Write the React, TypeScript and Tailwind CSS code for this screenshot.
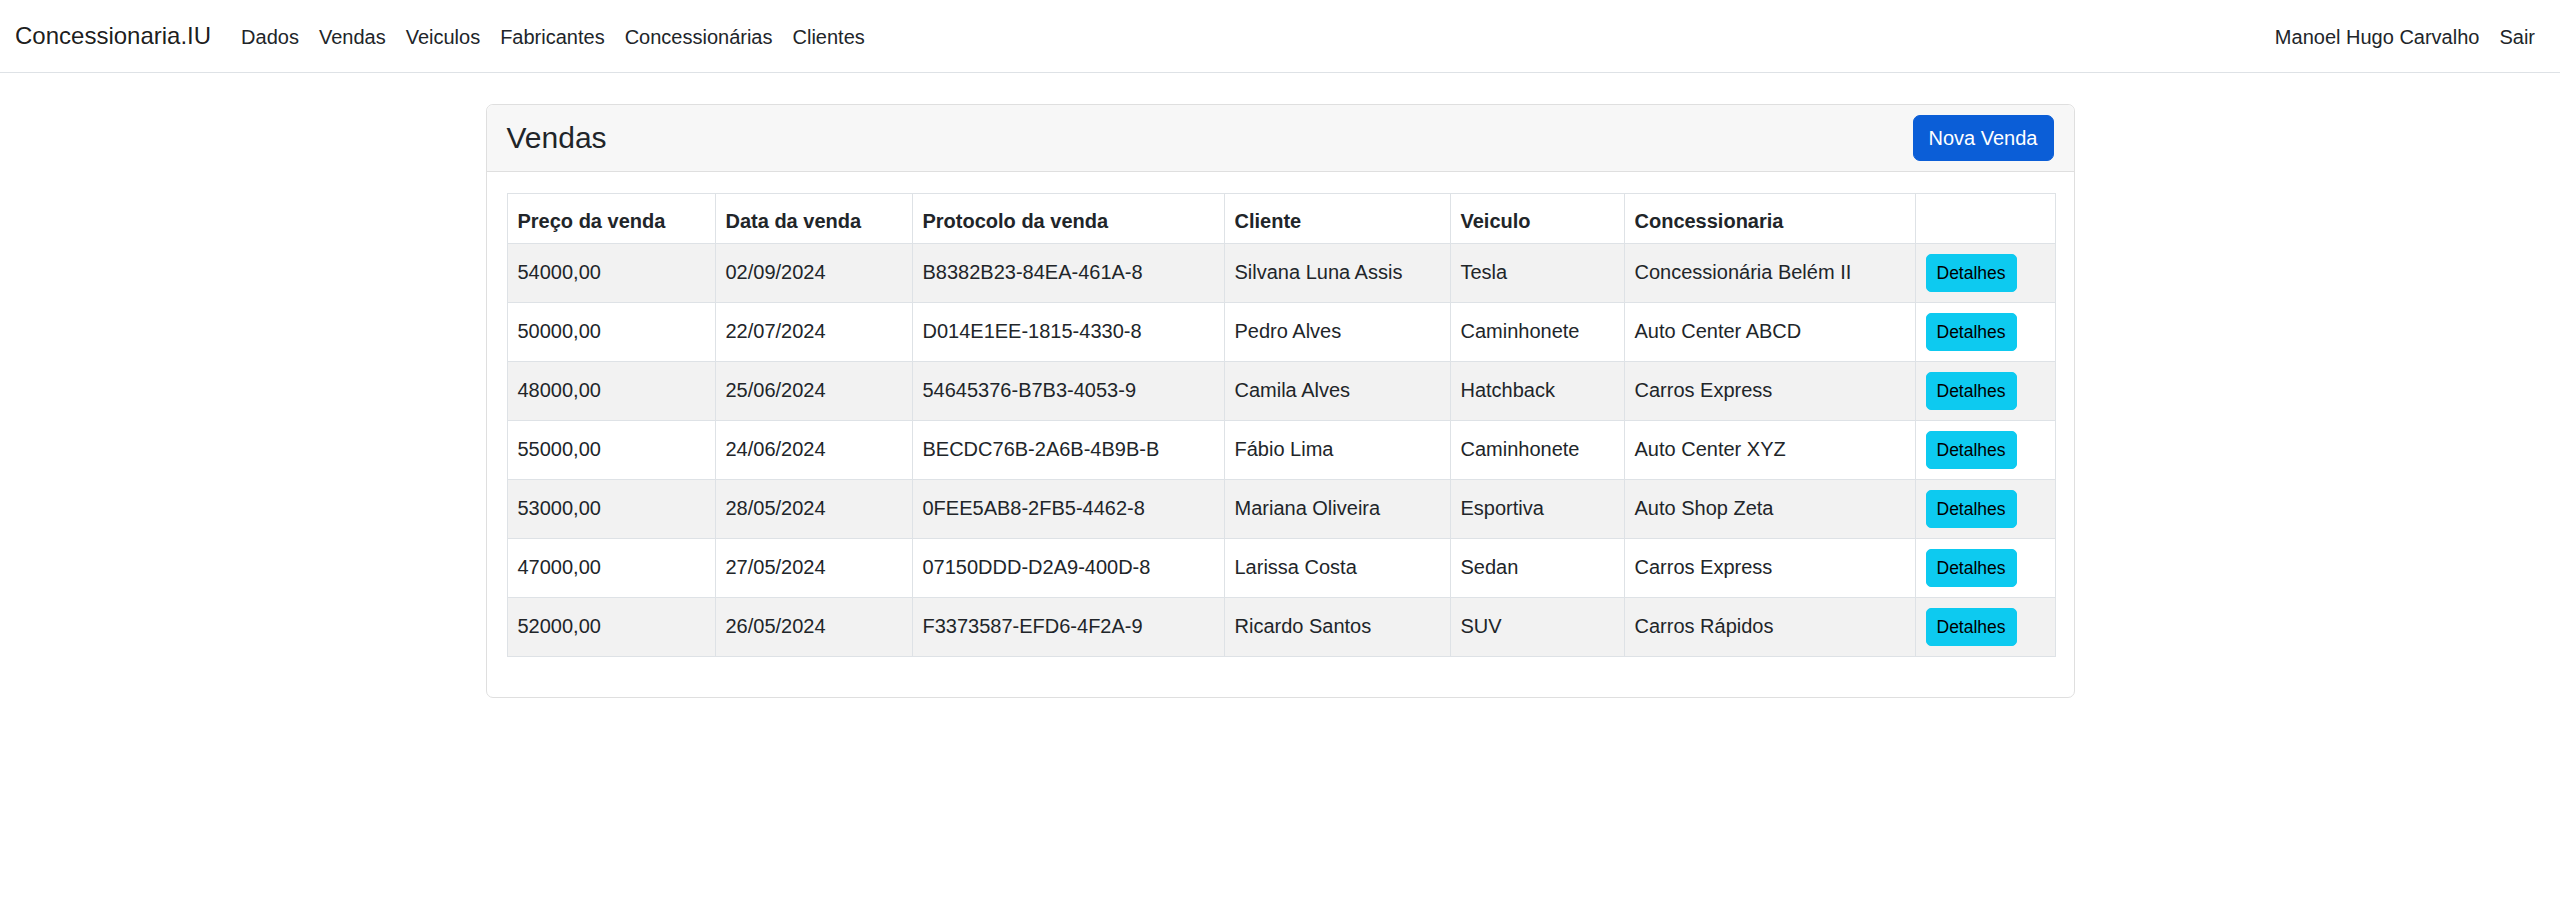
const vendas = [
  { preco: "54000,00", data: "02/09/2024", protocolo: "B8382B23-84EA-461A-8", cliente: "Silvana Luna Assis", veiculo: "Tesla", concessionaria: "Concessionária Belém II" },
  { preco: "50000,00", data: "22/07/2024", protocolo: "D014E1EE-1815-4330-8", cliente: "Pedro Alves", veiculo: "Caminhonete", concessionaria: "Auto Center ABCD" },
  { preco: "48000,00", data: "25/06/2024", protocolo: "54645376-B7B3-4053-9", cliente: "Camila Alves", veiculo: "Hatchback", concessionaria: "Carros Express" },
  { preco: "55000,00", data: "24/06/2024", protocolo: "BECDC76B-2A6B-4B9B-B", cliente: "Fábio Lima", veiculo: "Caminhonete", concessionaria: "Auto Center XYZ" },
  { preco: "53000,00", data: "28/05/2024", protocolo: "0FEE5AB8-2FB5-4462-8", cliente: "Mariana Oliveira", veiculo: "Esportiva", concessionaria: "Auto Shop Zeta" },
  { preco: "47000,00", data: "27/05/2024", protocolo: "07150DDD-D2A9-400D-8", cliente: "Larissa Costa", veiculo: "Sedan", concessionaria: "Carros Express" },
  { preco: "52000,00", data: "26/05/2024", protocolo: "F3373587-EFD6-4F2A-9", cliente: "Ricardo Santos", veiculo: "SUV", concessionaria: "Carros Rápidos" },
]

const navLinks = ["Dados", "Vendas", "Veiculos", "Fabricantes", "Concessionárias", "Clientes"]

export default function App() {
  return (
    <div className="min-h-screen bg-white font-['Segoe_UI','Liberation_Sans',sans-serif] text-[20px] leading-[30px] text-[#212529]">
      {/* navbar */}
      <nav className="flex items-center justify-between border-b border-[#dee2e6] px-[15px] py-[11px]">
        <div className="flex items-center">
          <a className="mr-[20px] py-[6px] text-[24px] leading-[37.5px] text-black/90">Concessionaria.IU</a>
          <ul className="flex">
            {navLinks.map((l) => (
              <li key={l}>
                <a className="block px-[10px] pt-[11px] pb-[9px] text-[#212529]">{l}</a>
              </li>
            ))}
          </ul>
        </div>
        <ul className="flex">
          <li>
            <a className="block px-[10px] pt-[11px] pb-[9px] text-[#212529]">Manoel Hugo Carvalho</a>
          </li>
          <li>
            <a className="block px-[10px] pt-[11px] pb-[9px] text-[#212529]">Sair</a>
          </li>
        </ul>
      </nav>

      {/* card */}
      <div className="mx-auto mt-[31px] w-[1589px] rounded-[7px] border border-[#dfdfdf]">
        <div className="flex items-center justify-between rounded-t-[7px] border-b border-[#dfdfdf] bg-[#f7f7f7] px-[20px] py-[10px]">
          <h4 className="text-[30px] leading-[36px] font-medium">Vendas</h4>
          <button className="rounded-[7px] border border-[#0b5ed7] bg-[#0b5ed7] px-[15px] py-[7px] text-white">
            Nova Venda
          </button>
        </div>
        <div className="px-[20px] pt-[21px] pb-[40px]">
          <table className="w-full table-fixed border-collapse border border-[#dee2e6]">
            <colgroup>
              <col className="w-[208px]" />
              <col className="w-[197px]" />
              <col className="w-[312px]" />
              <col className="w-[226px]" />
              <col className="w-[174px]" />
              <col className="w-[291px]" />
              <col className="w-[140px]" />
            </colgroup>
            <thead>
              <tr>
                {["Preço da venda", "Data da venda", "Protocolo da venda", "Cliente", "Veiculo", "Concessionaria", ""].map((h, i) => (
                  <th key={i} className="h-[50px] border border-[#dee2e6] px-[10px] pt-[12px] pb-[7px] text-left font-bold">
                    {h}
                  </th>
                ))}
              </tr>
            </thead>
            <tbody>
              {vendas.map((v, i) => (
                <tr key={v.protocolo} className={i % 2 === 0 ? "bg-[#f2f2f2]" : "bg-white"}>
                  <td className="border border-[#dee2e6] px-[10px] pt-[13px] pb-[8px] align-top">{v.preco}</td>
                  <td className="border border-[#dee2e6] px-[10px] pt-[13px] pb-[8px] align-top">{v.data}</td>
                  <td className="border border-[#dee2e6] px-[10px] pt-[13px] pb-[8px] align-top">{v.protocolo}</td>
                  <td className="border border-[#dee2e6] px-[10px] pt-[13px] pb-[8px] align-top">{v.cliente}</td>
                  <td className="border border-[#dee2e6] px-[10px] pt-[13px] pb-[8px] align-top">{v.veiculo}</td>
                  <td className="border border-[#dee2e6] px-[10px] pt-[13px] pb-[8px] align-top">{v.concessionaria}</td>
                  <td className="border border-[#dee2e6] px-[10px] py-[10px] align-top">
                    <button className="rounded-[5px] border border-[#0dcaf0] bg-[#0dcaf0] px-[10px] pt-[5px] pb-[5px] text-[17.5px] leading-[26px] text-black">
                      Detalhes
                    </button>
                  </td>
                </tr>
              ))}
            </tbody>
          </table>
        </div>
      </div>
    </div>
  )
}
